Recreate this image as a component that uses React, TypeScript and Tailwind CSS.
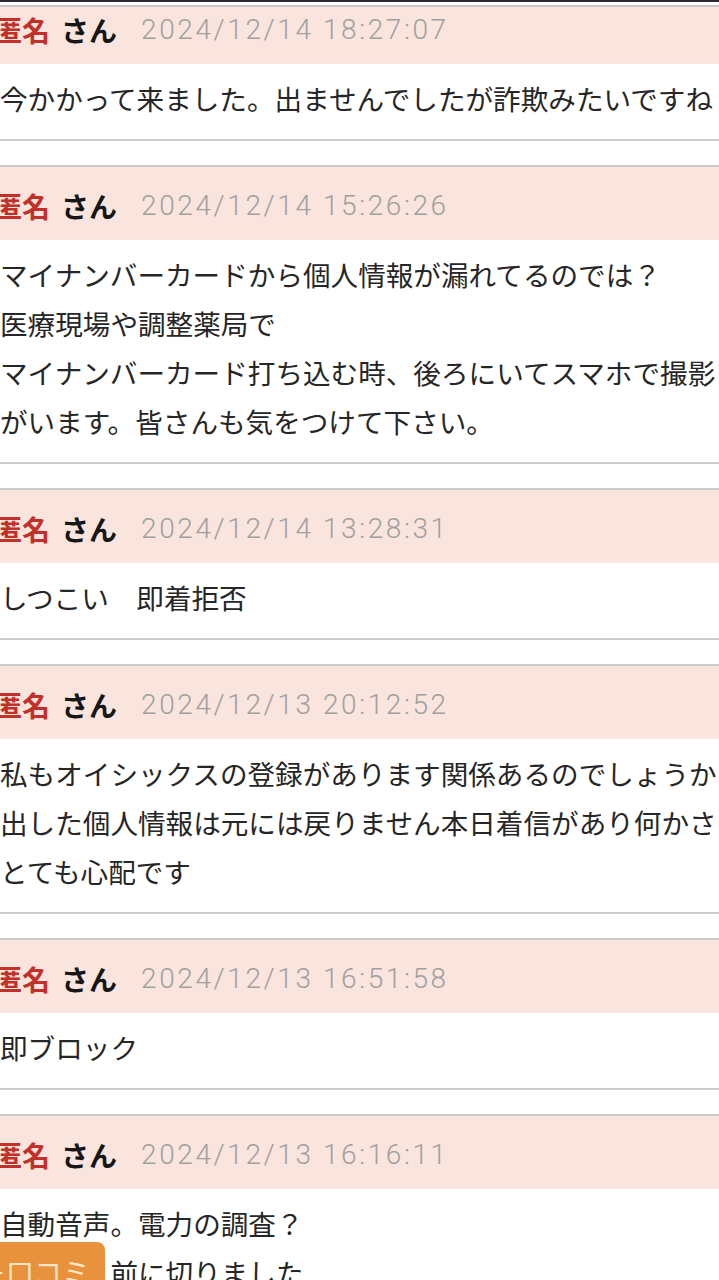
import React from 'react';

type Post = {
  date: string;
  lines: string[];
};

const posts: Post[] = [
  { date: '2024/12/14 18:27:07', lines: ['今かかって来ました。出ませんでしたが詐欺みたいですね'] },
  {
    date: '2024/12/14 15:26:26',
    lines: [
      'マイナンバーカードから個人情報が漏れてるのでは？',
      '医療現場や調整薬局で',
      'マイナンバーカード打ち込む時、後ろにいてスマホで撮影',
      'がいます。皆さんも気をつけて下さい。',
    ],
  },
  { date: '2024/12/14 13:28:31', lines: ['しつこい　即着拒否'] },
  {
    date: '2024/12/13 20:12:52',
    lines: [
      '私もオイシックスの登録があります関係あるのでしょうか',
      '出した個人情報は元には戻りません本日着信があり何かさ',
      'とても心配です',
    ],
  },
  { date: '2024/12/13 16:51:58', lines: ['即ブロック'] },
  { date: '2024/12/13 16:16:11', lines: ['自動音声。電力の調査？', '話を聞く前に切りました'] },
];

const jp = "font-['Noto_Sans_CJK_JP','Noto_Sans',sans-serif]";

function PostItem({ post }: { post: Post }) {
  return (
    <div className="mb-[24px] border-y-2 border-[#cbcbcb]">
      <div className="flex h-[73px] items-center bg-[#fae4de] pt-[4px]">
        <span className={`${jp} -ml-[6px] text-[28px] font-bold text-[#c2302a]`}>匿名</span>
        <span className={`${jp} ml-[11px] text-[28px] font-bold text-[#161616]`}>さん</span>
        <span className="ml-[24px] font-['Roboto',sans-serif] text-[28px] font-light tracking-[2.6px] text-[#a0a0a0]">
          {post.date}
        </span>
      </div>
      <div className={`${jp} pt-[10px] pb-[16px] text-[27.6px] leading-[49px] text-[#262626]`}>
        {post.lines.map((line, i) => (
          <div key={i} className="whitespace-nowrap">
            {line}
          </div>
        ))}
      </div>
    </div>
  );
}

export default function App() {
  return (
    <div className="relative h-[1280px] w-full overflow-hidden bg-white">
      <div className="-mt-[11px]">
        {posts.map((p, i) => (
          <PostItem key={i} post={p} />
        ))}
      </div>

      {/* browser chrome edge at the very top */}
      <div className="absolute inset-x-0 top-0 h-[7px] border-t-2 border-b-2 border-t-[#2a2a2a] border-b-[#c9c9c9] bg-white" />

      {/* floating review button */}
      <div className="absolute -left-[12px] top-[1242px] flex h-[60px] w-[117px] items-start rounded-lg bg-[#e8923d] pt-[14px]">
        <span className={`${jp} -ml-[10px] whitespace-nowrap text-[28px] leading-[32px] text-[#fde7c6]`}>＋口コミ</span>
      </div>
    </div>
  );
}
